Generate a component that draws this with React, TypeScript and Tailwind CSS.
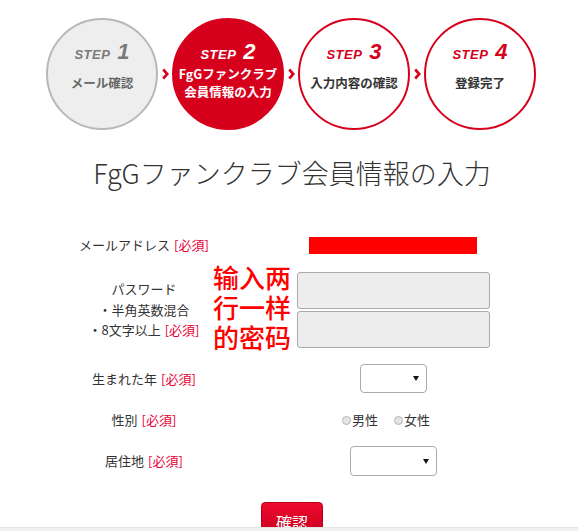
import React from "react";

type Step = {
  no: string;
  lines: string[];
  kind: "done" | "current" | "todo";
};

const steps: Step[] = [
  { no: "1", lines: ["メール確認"], kind: "done" },
  { no: "2", lines: ["FgGファンクラブ", "会員情報の入力"], kind: "current" },
  { no: "3", lines: ["入力内容の確認"], kind: "todo" },
  { no: "4", lines: ["登録完了"], kind: "todo" },
];

const Chevron = () => (
  <div className="w-[14px] flex items-center justify-center">
    <svg width="7" height="12" viewBox="0 0 7 12">
      <path d="M1.2 1.5 L5.3 6 L1.2 10.5" fill="none" stroke="#d7001c" strokeWidth="2.6" />
    </svg>
  </div>
);

const StepCircle = ({ step }: { step: Step }) => {
  const circle =
    step.kind === "done"
      ? "bg-[#eeeeee] border-[#b8b8b8]"
      : step.kind === "current"
      ? "bg-[#d7001c] border-[#d7001c]"
      : "bg-white border-[#d7001c]";
  const stepColor =
    step.kind === "done" ? "text-[#7a7a7a]" : step.kind === "current" ? "text-white" : "text-[#d7001c]";
  const labelColor =
    step.kind === "done" ? "text-[#666]" : step.kind === "current" ? "text-white" : "text-[#333]";
  return (
    <div className={`w-[112px] h-[112px] rounded-full border-2 flex flex-col items-center ${circle}`}>
      <div className={`mt-[21px] h-[22px] flex items-end gap-[7px] italic font-bold font-['Liberation_Sans',sans-serif] ${stepColor}`}>
        <span className="text-[13px] leading-[16px] tracking-[0.5px]">STEP</span>
        <span className="text-[22px] leading-[22px]">{step.no}</span>
      </div>
      <div className={`h-[40px] flex flex-col items-center justify-center text-[12.5px] leading-[18px] font-bold font-['Noto_Sans_CJK_JP',sans-serif] ${labelColor}`}>
        {step.lines.map((l) => (
          <span key={l}>{l}</span>
        ))}
      </div>
    </div>
  );
};

const Req = () => <span className="text-[#e60033] ml-[4px]">[必須]</span>;

const Select = ({ w }: { w: string }) => (
  <div className={`${w} h-full border border-[#aaaaaa] rounded-[4px] bg-white flex items-center justify-end pr-[7px]`}>
    <svg width="6" height="5" viewBox="0 0 6 5">
      <path d="M0 0 H6 L3 5 Z" fill="#111" />
    </svg>
  </div>
);

const Radio = ({ label }: { label: string }) => (
  <label className="flex items-center gap-[1px]">
    <span className="w-[9px] h-[9px] rounded-full border border-[#b5b5b5] bg-[#e4e4e4]" />
    <span>{label}</span>
  </label>
);

export default function App() {
  return (
    <div className="w-[578px] h-[531px] overflow-hidden flex flex-col bg-white font-['Noto_Sans_CJK_JP',sans-serif]">
      <div className="flex-1 overflow-hidden relative">
        {/* steps */}
        <div className="flex pt-[18px] pl-[46px]">
          <StepCircle step={steps[0]} />
          <Chevron />
          <StepCircle step={steps[1]} />
          <Chevron />
          <StepCircle step={steps[2]} />
          <Chevron />
          <StepCircle step={steps[3]} />
        </div>

        <h1 className="mt-[24px] h-[38px] text-center text-[27px] leading-[38px] font-light text-[#333] pl-[6px]">
          FgGファンクラブ会員情報の入力
        </h1>

        {/* form */}
        <div className="mt-[36px] flex flex-col text-[13px] text-[#333]">
          <div className="h-[34px] grid grid-cols-[288px_210px] items-center">
            <div className="text-center">
              メールアドレス<Req />
            </div>
            <div className="flex justify-center">
              <div className="w-[168px] h-[17px] bg-[#ff0000]" />
            </div>
          </div>

          <div className="mt-[10px] h-[75px] grid grid-cols-[288px_210px] items-center">
            <div className="flex flex-col items-center leading-[20.5px]">
              <span>パスワード</span>
              <span>・半角英数混合</span>
              <span>
                ・8文字以上<Req />
              </span>
            </div>
            <div className="flex flex-col items-center gap-[2px]">
              <div className="w-[193px] h-[37px] rounded-[3px] border border-[#aaaaaa] bg-[#ededed]" />
              <div className="w-[193px] h-[37px] rounded-[3px] border border-[#aaaaaa] bg-[#ededed]" />
            </div>
          </div>

          <div className="mt-[17px] h-[29px] grid grid-cols-[288px_210px] items-center">
            <div className="text-center">
              生まれた年<Req />
            </div>
            <div className="h-full flex justify-center">
              <Select w="w-[67px]" />
            </div>
          </div>

          <div className="mt-[12px] h-[30px] grid grid-cols-[288px_210px] items-center">
            <div className="text-center">
              性別<Req />
            </div>
            <div className="flex justify-center gap-[16px] pr-[14px]">
              <Radio label="男性" />
              <Radio label="女性" />
            </div>
          </div>

          <div className="mt-[11px] h-[30px] grid grid-cols-[288px_210px] items-center">
            <div className="text-center">
              居住地<Req />
            </div>
            <div className="h-full flex justify-center">
              <Select w="w-[87px]" />
            </div>
          </div>

          <div className="mt-[26px] flex justify-center pl-[6px]">
            <button className="w-[62px] h-[38px] rounded-t-[4px] border border-[#b8001a] bg-gradient-to-b from-[#f00a30] to-[#c2001b] text-white text-[16px] leading-[38px] pb-[2px]">
              確認
            </button>
          </div>
        </div>

        {/* annotation */}
        <div className="absolute left-[213px] top-[262px] text-[#ff0000] text-[26px] leading-[30px] font-medium font-['Noto_Sans_CJK_SC',sans-serif]">
          <div>输入两</div>
          <div>行一样</div>
          <div>的密码</div>
        </div>
      </div>
      <div className="h-[4px] bg-[#f0f0f0] border-t border-[#e2e2e2]" />
    </div>
  );
}
